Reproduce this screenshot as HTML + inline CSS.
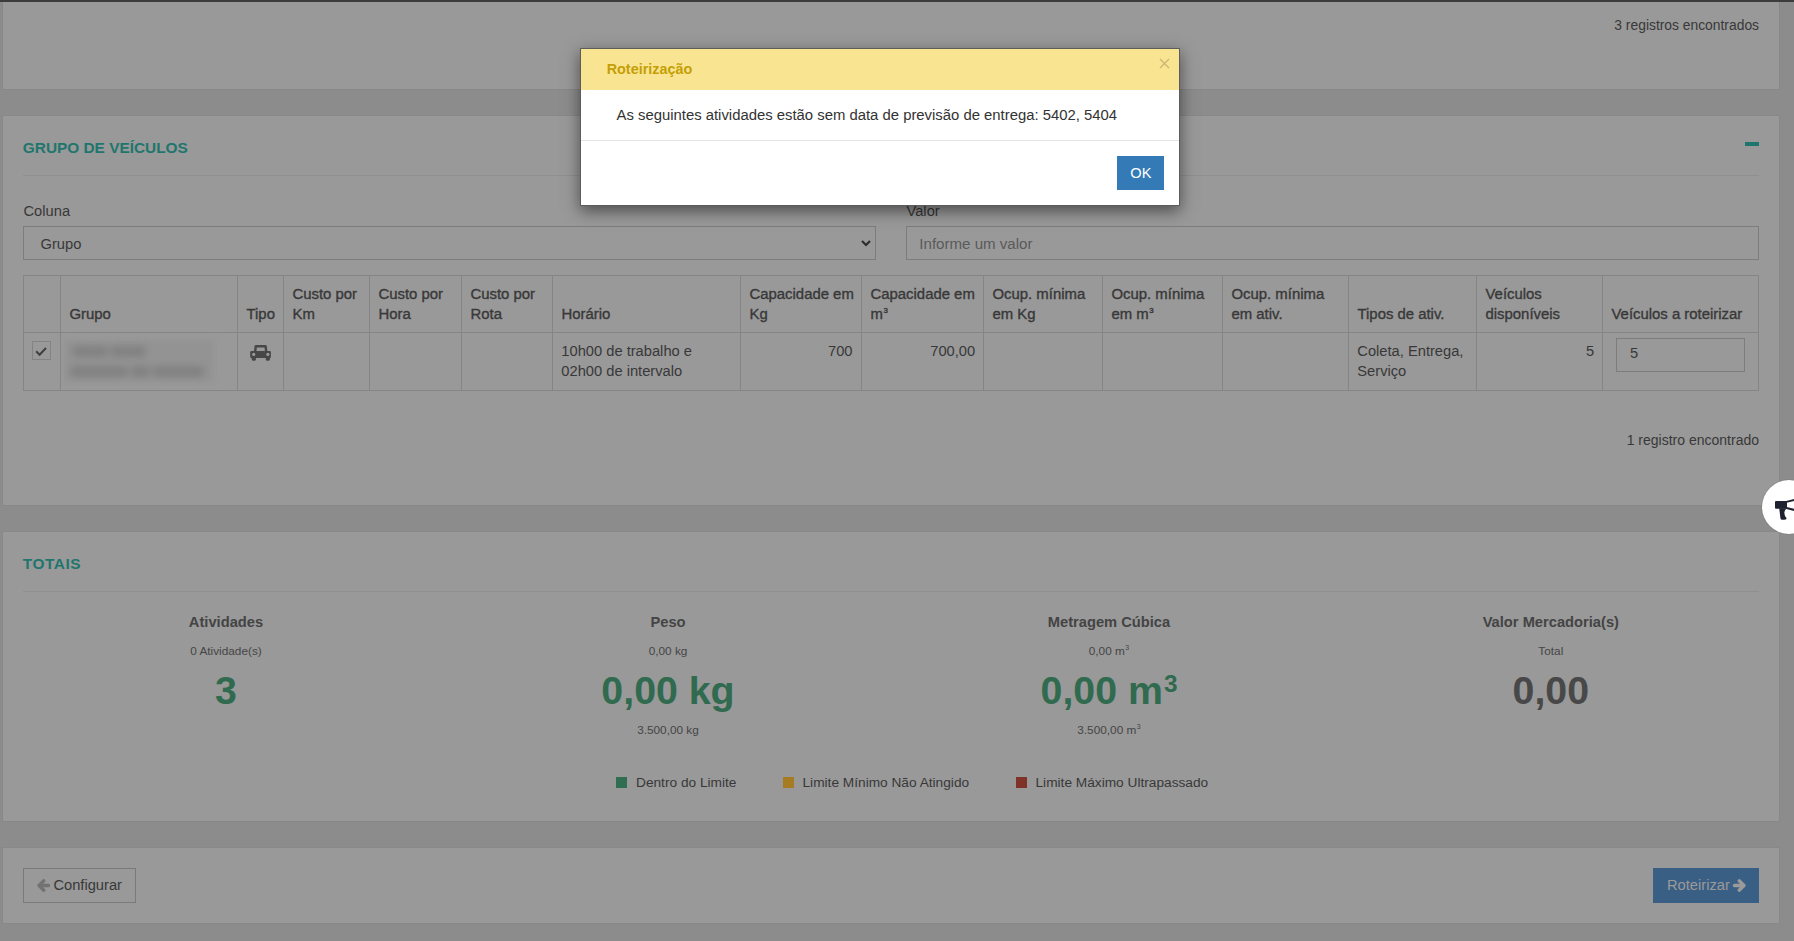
<!DOCTYPE html>
<html><head><meta charset="utf-8"><title>Roteirização</title>
<style>
*{box-sizing:border-box;margin:0;padding:0}
html,body{width:1794px;height:941px;overflow:hidden}
body{position:relative;background:#8c8c8c;font-family:"Liberation Sans",sans-serif}
.a{position:absolute}
.t{position:absolute;white-space:nowrap}
sup{font-size:62%;vertical-align:top;position:relative;top:-0.28em;margin-left:1px}
</style></head><body>
<div class="a" style="left:3px;top:2px;width:1776px;height:87px;background:#999999;box-shadow:0 0 0 1px #888"></div>
<div class="a" style="left:3px;top:116px;width:1776px;height:389px;background:#999999;box-shadow:0 0 0 1px #888"></div>
<div class="a" style="left:3px;top:532px;width:1776px;height:289px;background:#999999;box-shadow:0 0 0 1px #888"></div>
<div class="a" style="left:3px;top:848px;width:1776px;height:75px;background:#999999;box-shadow:0 0 0 1px #888"></div>
<div class="a" style="left:0px;top:0px;width:1794px;height:2px;background:#3c3c3c"></div>
<div class="t" style="right:35.00px;top:17.00px;font-size:13.85px;line-height:17px;color:#383838;font-weight:400;">3 registros encontrados</div>
<div class="t" style="left:22.80px;top:138.06px;font-size:15.4px;line-height:19px;color:#1f766d;font-weight:700;">GRUPO DE VEÍCULOS</div>
<div class="a" style="left:1745px;top:142px;width:14px;height:4px;background:#1f766d"></div>
<div class="a" style="left:23px;top:175px;width:1736px;height:1px;background:#8f8f8f"></div>
<div class="t" style="left:23.50px;top:201.81px;font-size:14.7px;line-height:18px;color:#383838;font-weight:400;">Coluna</div>
<div class="t" style="left:906.50px;top:201.81px;font-size:14.7px;line-height:18px;color:#383838;font-weight:400;">Valor</div>
<div class="a" style="left:23px;top:226px;width:853px;height:34px;border:1px solid #7d7d7d;background:#999999"></div>
<div class="t" style="left:40.50px;top:234.71px;font-size:14.7px;line-height:18px;color:#383838;font-weight:400;">Grupo</div>
<svg class="a" style="left:860px;top:239px" width="12" height="9" viewBox="0 0 12 9"><path d="M2 2 L6 6 L10 2" fill="none" stroke="#2e2e2e" stroke-width="2.2"/></svg>
<div class="a" style="left:906px;top:226px;width:853px;height:34px;border:1px solid #7d7d7d;background:#999999"></div>
<div class="t" style="left:919.30px;top:234.47px;font-size:15.1px;line-height:19px;color:#5a5a5a;font-weight:400;">Informe um valor</div>
<div class="a" style="left:23px;top:275px;width:1px;height:116px;background:#858585"></div>
<div class="a" style="left:60px;top:275px;width:1px;height:116px;background:#858585"></div>
<div class="a" style="left:237px;top:275px;width:1px;height:116px;background:#858585"></div>
<div class="a" style="left:283px;top:275px;width:1px;height:116px;background:#858585"></div>
<div class="a" style="left:369px;top:275px;width:1px;height:116px;background:#858585"></div>
<div class="a" style="left:461px;top:275px;width:1px;height:116px;background:#858585"></div>
<div class="a" style="left:552px;top:275px;width:1px;height:116px;background:#858585"></div>
<div class="a" style="left:740px;top:275px;width:1px;height:116px;background:#858585"></div>
<div class="a" style="left:861px;top:275px;width:1px;height:116px;background:#858585"></div>
<div class="a" style="left:983px;top:275px;width:1px;height:116px;background:#858585"></div>
<div class="a" style="left:1102px;top:275px;width:1px;height:116px;background:#858585"></div>
<div class="a" style="left:1222px;top:275px;width:1px;height:116px;background:#858585"></div>
<div class="a" style="left:1348px;top:275px;width:1px;height:116px;background:#858585"></div>
<div class="a" style="left:1476px;top:275px;width:1px;height:116px;background:#858585"></div>
<div class="a" style="left:1602px;top:275px;width:1px;height:116px;background:#858585"></div>
<div class="a" style="left:1758px;top:275px;width:1px;height:116px;background:#858585"></div>
<div class="a" style="left:23px;top:275px;width:1736px;height:1px;background:#858585"></div>
<div class="a" style="left:23px;top:332px;width:1736px;height:1px;background:#858585"></div>
<div class="a" style="left:23px;top:390px;width:1736px;height:1px;background:#858585"></div>
<div class="t" style="left:69.50px;top:304.84px;font-size:14.9px;line-height:19px;color:#383838;font-weight:400;-webkit-text-stroke:0.35px #383838">Grupo</div>
<div class="t" style="left:246.50px;top:304.84px;font-size:14.9px;line-height:19px;color:#383838;font-weight:400;-webkit-text-stroke:0.35px #383838">Tipo</div>
<div class="t" style="left:292.50px;top:284.74px;font-size:14.9px;line-height:19px;color:#383838;font-weight:400;-webkit-text-stroke:0.35px #383838">Custo por</div>
<div class="t" style="left:292.50px;top:304.84px;font-size:14.9px;line-height:19px;color:#383838;font-weight:400;-webkit-text-stroke:0.35px #383838">Km</div>
<div class="t" style="left:378.50px;top:284.74px;font-size:14.9px;line-height:19px;color:#383838;font-weight:400;-webkit-text-stroke:0.35px #383838">Custo por</div>
<div class="t" style="left:378.50px;top:304.84px;font-size:14.9px;line-height:19px;color:#383838;font-weight:400;-webkit-text-stroke:0.35px #383838">Hora</div>
<div class="t" style="left:470.50px;top:284.74px;font-size:14.9px;line-height:19px;color:#383838;font-weight:400;-webkit-text-stroke:0.35px #383838">Custo por</div>
<div class="t" style="left:470.50px;top:304.84px;font-size:14.9px;line-height:19px;color:#383838;font-weight:400;-webkit-text-stroke:0.35px #383838">Rota</div>
<div class="t" style="left:561.50px;top:304.84px;font-size:14.9px;line-height:19px;color:#383838;font-weight:400;-webkit-text-stroke:0.35px #383838">Horário</div>
<div class="t" style="left:749.50px;top:284.74px;font-size:14.9px;line-height:19px;color:#383838;font-weight:400;-webkit-text-stroke:0.35px #383838">Capacidade em</div>
<div class="t" style="left:749.50px;top:304.84px;font-size:14.9px;line-height:19px;color:#383838;font-weight:400;-webkit-text-stroke:0.35px #383838">Kg</div>
<div class="t" style="left:870.50px;top:284.74px;font-size:14.9px;line-height:19px;color:#383838;font-weight:400;-webkit-text-stroke:0.35px #383838">Capacidade em</div>
<div class="t" style="left:870.50px;top:304.84px;font-size:14.9px;line-height:19px;color:#383838;font-weight:400;-webkit-text-stroke:0.35px #383838">m<span style="font-size:8px;position:relative;top:-6.3px;margin-left:0.5px">3</span></div>
<div class="t" style="left:992.50px;top:284.74px;font-size:14.9px;line-height:19px;color:#383838;font-weight:400;-webkit-text-stroke:0.35px #383838">Ocup. mínima</div>
<div class="t" style="left:992.50px;top:304.84px;font-size:14.9px;line-height:19px;color:#383838;font-weight:400;-webkit-text-stroke:0.35px #383838">em Kg</div>
<div class="t" style="left:1111.50px;top:284.74px;font-size:14.9px;line-height:19px;color:#383838;font-weight:400;-webkit-text-stroke:0.35px #383838">Ocup. mínima</div>
<div class="t" style="left:1111.50px;top:304.84px;font-size:14.9px;line-height:19px;color:#383838;font-weight:400;-webkit-text-stroke:0.35px #383838">em m<span style="font-size:8px;position:relative;top:-6.3px;margin-left:0.5px">3</span></div>
<div class="t" style="left:1231.50px;top:284.74px;font-size:14.9px;line-height:19px;color:#383838;font-weight:400;-webkit-text-stroke:0.35px #383838">Ocup. mínima</div>
<div class="t" style="left:1231.50px;top:304.84px;font-size:14.9px;line-height:19px;color:#383838;font-weight:400;-webkit-text-stroke:0.35px #383838">em ativ.</div>
<div class="t" style="left:1357.50px;top:304.84px;font-size:14.9px;line-height:19px;color:#383838;font-weight:400;-webkit-text-stroke:0.35px #383838">Tipos de ativ.</div>
<div class="t" style="left:1485.50px;top:284.74px;font-size:14.9px;line-height:19px;color:#383838;font-weight:400;-webkit-text-stroke:0.35px #383838">Veículos</div>
<div class="t" style="left:1485.50px;top:304.84px;font-size:14.9px;line-height:19px;color:#383838;font-weight:400;-webkit-text-stroke:0.35px #383838">disponíveis</div>
<div class="t" style="left:1611.50px;top:304.84px;font-size:14.9px;line-height:19px;color:#383838;font-weight:400;-webkit-text-stroke:0.35px #383838">Veículos a roteirizar</div>
<div class="a" style="left:32px;top:341px;width:19px;height:19px;border:1px solid #838383;background:#999"></div>
<svg class="a" style="left:32px;top:341px" width="19" height="19" viewBox="0 0 19 19"><path d="M4.2 10.3 L7.6 13.7 L14 7" fill="none" stroke="#404040" stroke-width="2"/></svg>
<div class="a" style="left:64px;top:340px;width:150px;height:42px;background:#939393;filter:blur(3px)"></div>
<div class="a" style="left:72px;top:346px;width:36px;height:11px;background:#7a7a7a;filter:blur(3.5px);border-radius:5px;opacity:.7"></div>
<div class="a" style="left:110px;top:346px;width:36px;height:11px;background:#7a7a7a;filter:blur(3.5px);border-radius:5px;opacity:.7"></div>
<div class="a" style="left:70px;top:366px;width:58px;height:11px;background:#7a7a7a;filter:blur(3.5px);border-radius:5px;opacity:.7"></div>
<div class="a" style="left:130px;top:366px;width:20px;height:11px;background:#7a7a7a;filter:blur(3.5px);border-radius:5px;opacity:.7"></div>
<div class="a" style="left:152px;top:366px;width:52px;height:11px;background:#7a7a7a;filter:blur(3.5px);border-radius:5px;opacity:.7"></div>
<svg class="a" style="left:250px;top:345px" width="21" height="16" viewBox="0 0 21 16"><path d="M4 6.2 L4.6 1.2 Q4.8 0 6 0 L15.4 0 Q16.6 0 16.8 1.2 L17.4 6.2 Z" fill="#474747"/><path d="M6.4 6.2 L6.9 2.4 L14.5 2.4 L15 6.2 Z" fill="#999"/><rect x="0.2" y="6" width="20.7" height="7" rx="1.2" fill="#474747"/><rect x="1.8" y="11" width="4.1" height="4.8" rx="1.6" fill="#474747"/><rect x="15.8" y="11" width="4.1" height="4.8" rx="1.6" fill="#474747"/><circle cx="3.7" cy="9.4" r="1.6" fill="#999"/><circle cx="17.9" cy="9.4" r="1.6" fill="#999"/></svg>
<div class="t" style="left:561.30px;top:341.91px;font-size:14.7px;line-height:18px;color:#383838;font-weight:400;">10h00 de trabalho e</div>
<div class="t" style="left:561.30px;top:361.91px;font-size:14.7px;line-height:18px;color:#383838;font-weight:400;">02h00 de intervalo</div>
<div class="t" style="right:941.50px;top:341.91px;font-size:14.7px;line-height:18px;color:#383838;font-weight:400;">700</div>
<div class="t" style="right:818.80px;top:341.91px;font-size:14.7px;line-height:18px;color:#383838;font-weight:400;">700,00</div>
<div class="t" style="left:1357.30px;top:341.91px;font-size:14.7px;line-height:18px;color:#383838;font-weight:400;">Coleta, Entrega,</div>
<div class="t" style="left:1357.30px;top:361.91px;font-size:14.7px;line-height:18px;color:#383838;font-weight:400;">Serviço</div>
<div class="t" style="right:199.80px;top:341.91px;font-size:14.7px;line-height:18px;color:#383838;font-weight:400;">5</div>
<div class="a" style="left:1616px;top:338px;width:129px;height:34px;border:1px solid #7d7d7d;background:#999999"></div>
<div class="t" style="left:1630.00px;top:344.21px;font-size:14.7px;line-height:18px;color:#383838;font-weight:400;">5</div>
<div class="t" style="right:35.00px;top:431.05px;font-size:14.0px;line-height:18px;color:#383838;font-weight:400;">1 registro encontrado</div>
<div class="t" style="left:22.80px;top:554.06px;font-size:15.4px;line-height:19px;color:#1f766d;font-weight:700;letter-spacing:0.55px">TOTAIS</div>
<div class="a" style="left:23px;top:591px;width:1736px;height:1px;background:#8f8f8f"></div>
<div class="t" style="left:-174.00px;width:800px;text-align:center;top:613.11px;font-size:14.7px;line-height:18px;color:#444;font-weight:700;">Atividades</div>
<div class="t" style="left:-174.00px;width:800px;text-align:center;top:643.71px;font-size:11.8px;line-height:15px;color:#454545;font-weight:400;">0 Atividade(s)</div>
<div class="t" style="left:-174.00px;width:800px;text-align:center;top:666.08px;font-size:39.3px;line-height:49px;color:#306a4f;font-weight:700;">3</div>
<div class="t" style="left:268.00px;width:800px;text-align:center;top:613.11px;font-size:14.7px;line-height:18px;color:#444;font-weight:700;">Peso</div>
<div class="t" style="left:268.00px;width:800px;text-align:center;top:643.71px;font-size:11.8px;line-height:15px;color:#454545;font-weight:400;">0,00 kg</div>
<div class="t" style="left:268.00px;width:800px;text-align:center;top:666.08px;font-size:39.3px;line-height:49px;color:#306a4f;font-weight:700;">0,00 kg</div>
<div class="t" style="left:268.00px;width:800px;text-align:center;top:723.01px;font-size:11.8px;line-height:15px;color:#454545;font-weight:400;">3.500,00 kg</div>
<div class="t" style="left:709.00px;width:800px;text-align:center;top:613.11px;font-size:14.7px;line-height:18px;color:#444;font-weight:700;">Metragem Cúbica</div>
<div class="t" style="left:709.00px;width:800px;text-align:center;top:643.71px;font-size:11.8px;line-height:15px;color:#454545;font-weight:400;">0,00 m<span style="font-size:7px;position:relative;top:-4.6px;margin-left:0.5px">3</span></div>
<div class="t" style="left:709.00px;width:800px;text-align:center;top:666.08px;font-size:39.3px;line-height:49px;color:#306a4f;font-weight:700;">0,00 m<sup>3</sup></div>
<div class="t" style="left:709.00px;width:800px;text-align:center;top:723.01px;font-size:11.8px;line-height:15px;color:#454545;font-weight:400;">3.500,00 m<span style="font-size:7px;position:relative;top:-4.6px;margin-left:0.5px">3</span></div>
<div class="t" style="left:1150.80px;width:800px;text-align:center;top:613.11px;font-size:14.7px;line-height:18px;color:#444;font-weight:700;">Valor Mercadoria(s)</div>
<div class="t" style="left:1150.80px;width:800px;text-align:center;top:643.71px;font-size:11.8px;line-height:15px;color:#454545;font-weight:400;">Total</div>
<div class="t" style="left:1150.80px;width:800px;text-align:center;top:666.08px;font-size:39.3px;line-height:49px;color:#484848;font-weight:700;">0,00</div>
<div class="a" style="left:616px;top:777px;width:11px;height:11px;background:#2f6e50"></div>
<div class="t" style="left:636.00px;top:774.25px;font-size:13.7px;line-height:17px;color:#383838;font-weight:400;">Dentro do Limite</div>
<div class="a" style="left:783px;top:777px;width:11px;height:11px;background:#a77b22"></div>
<div class="t" style="left:802.50px;top:774.25px;font-size:13.7px;line-height:17px;color:#383838;font-weight:400;">Limite Mínimo Não Atingido</div>
<div class="a" style="left:1016px;top:777px;width:11px;height:11px;background:#7f3228"></div>
<div class="t" style="left:1035.50px;top:774.25px;font-size:13.7px;line-height:17px;color:#383838;font-weight:400;">Limite Máximo Ultrapassado</div>
<div class="a" style="left:23px;top:868px;width:113px;height:35px;border:1px solid #7a7a7a;background:#999999"></div>
<svg class="a" style="left:37px;top:879px" width="13" height="13" viewBox="0 0 13 13"><path d="M6.8 1.8 L2 6.5 L6.8 11.2 M2.5 6.5 L11.6 6.5" fill="none" stroke="#727272" stroke-width="3.3" stroke-linecap="round" stroke-linejoin="round"/></svg>
<div class="t" style="left:53.40px;top:875.71px;font-size:14.7px;line-height:18px;color:#383838;font-weight:400;">Configurar</div>
<div class="a" style="left:1653px;top:868px;width:106px;height:35px;background:#3a5f84"></div>
<div class="t" style="left:1667.00px;top:875.71px;font-size:14.7px;line-height:18px;color:#9a9a9a;font-weight:400;">Roteirizar</div>
<svg class="a" style="left:1732px;top:879px" width="14" height="13" viewBox="0 0 14 13"><path d="M7.2 1.8 L12 6.5 L7.2 11.2 M11.5 6.5 L2.4 6.5" fill="none" stroke="#9a9a9a" stroke-width="3.3" stroke-linecap="round" stroke-linejoin="round"/></svg>
<div class="a" style="left:1762px;top:480px;width:54px;height:54px;border-radius:50%;background:#fff;box-shadow:0 0 1px #555"></div>
<svg class="a" style="left:1774px;top:494px" width="20" height="28" viewBox="0 0 20 28"><path d="M1 8 Q1 7 2 7 L13 7 L13 14.7 L2 14.7 Q1 14.7 1 13.7 Z" fill="#1e2230"/><path d="M5.2 14.3 L12.8 14.3 Q10.5 16 10.3 18.5 Q10.4 22.5 12.7 24.2 Q12 25.8 9.8 25.7 L7.8 25.7 Q6.5 25.5 6.4 24 Z" fill="#1e2230"/><path d="M12.5 7.9 L20.5 5.8 M12.5 14 L20.5 16" stroke="#1e2230" stroke-width="2" fill="none"/></svg>
<div class="a" style="left:580px;top:48px;width:600px;height:158px;border:1px solid #5c5c5c;background:#fff;box-shadow:0 5px 15px rgba(0,0,0,.5)"></div>
<div class="a" style="left:581px;top:49px;width:598px;height:41px;background:#f9e491"></div>
<div class="t" style="left:606.70px;top:59.81px;font-size:14.4px;line-height:18px;color:#c49f05;font-weight:700;">Roteirização</div>
<svg class="a" style="left:1159px;top:58px" width="11" height="11" viewBox="0 0 11 11"><path d="M1 1 L10 10 M10 1 L1 10" stroke="#c7b674" stroke-width="1.3"/></svg>
<div class="t" style="left:616.50px;top:105.95px;font-size:14.86px;line-height:19px;color:#333;font-weight:400;">As seguintes atividades estão sem data de previsão de entrega: 5402, 5404</div>
<div class="a" style="left:581px;top:140px;width:598px;height:1px;background:#e5e5e5"></div>
<div class="a" style="left:1117px;top:156px;width:47px;height:34px;background:#337ab7"></div>
<div class="t" style="left:1130.30px;top:163.94px;font-size:14.6px;line-height:18px;color:#fff;font-weight:400;">OK</div>
</body></html>
